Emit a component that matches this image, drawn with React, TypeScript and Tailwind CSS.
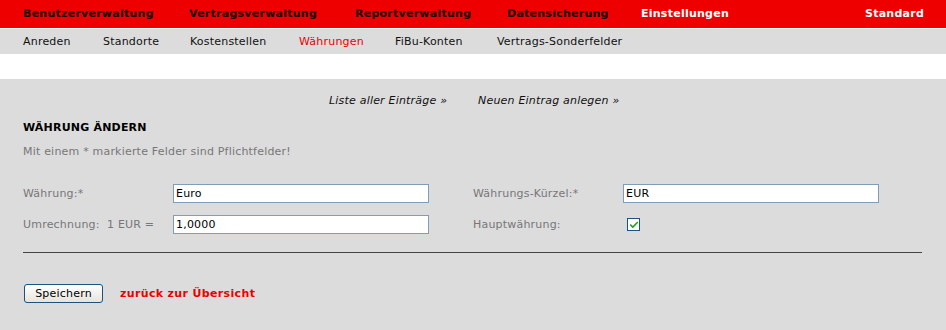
import { Check } from "lucide-react";

const mainMenu = [
  { label: "Benutzerverwaltung", w: "w-[166px]", active: false },
  { label: "Vertragsverwaltung", w: "w-[166px]", active: false },
  { label: "Reportverwaltung", w: "w-[152px]", active: false },
  { label: "Datensicherung", w: "w-[134px]", active: false },
  { label: "Einstellungen", w: "w-[150px]", active: true },
];

const subMenu = [
  { label: "Anreden", w: "w-[80px]", red: false },
  { label: "Standorte", w: "w-[87px]", red: false },
  { label: "Kostenstellen", w: "w-[109px]", red: false },
  { label: "Währungen", w: "w-[96px]", red: true },
  { label: "FiBu-Konten", w: "w-[102px]", red: false },
  { label: "Vertrags-Sonderfelder", w: "w-[160px]", red: false },
];

export default function App() {
  return (
    <div className="w-[946px] h-[330px] bg-white text-[11px] leading-[14px] tracking-[0.2px] font-['DejaVu_Sans',Verdana,sans-serif] overflow-hidden">

      {/* MAIN MENU */}
      <div className="h-[28px] bg-[#ee0000] flex items-center pl-[23px] pr-[22px] font-bold tracking-[0.25px]">
        {mainMenu.map((m) => (
          <div
            key={m.label}
            className={`${m.w} ${m.active ? "text-white" : "text-[#1a0000]"}`}
          >
            {m.label}
          </div>
        ))}
        <div className="ml-auto text-white">Standard</div>
      </div>

      {/* SUB MENU */}
      <div className="mt-px h-[25px] bg-[#dcdcdc] flex items-center pl-[23px]">
        {subMenu.map((s) => (
          <div
            key={s.label}
            className={`${s.w} ${s.red ? "text-[#ee0000]" : "text-[#111]"}`}
          >
            {s.label}
          </div>
        ))}
      </div>

      {/* CONTENT */}
      <div className="mt-[25px] h-[251px] bg-[#dcdcdc] px-[23px] pt-[15px]">

        <div className="flex h-[14px] pl-[306px] italic text-[#111]">
          <span className="w-[149px]">Liste aller Einträge »</span>
          <span>Neuen Eintrag anlegen »</span>
        </div>

        <h1 className="mt-[13px] h-[14px] font-bold text-black">WÄHRUNG ÄNDERN</h1>
        <p className="mt-[10px] h-[14px] text-[#777]">
          Mit einem * markierte Felder sind Pflichtfelder!
        </p>

        {/* FORM */}
        <div className="mt-[25px] flex flex-col gap-[12px] text-[#777]">
          <div className="flex items-center h-[19px]">
            <label className="w-[150px]">Währung:*</label>
            <input
              defaultValue="Euro"
              className="w-[256px] h-[19px] bg-white border border-[#7f9db9] px-[2px] text-black outline-none"
            />
            <label className="ml-[44px] w-[150px]">Währungs-Kürzel:*</label>
            <input
              defaultValue="EUR"
              className="w-[256px] h-[19px] bg-white border border-[#7f9db9] px-[2px] text-black outline-none"
            />
          </div>
          <div className="flex items-center h-[19px]">
            <label className="w-[150px] whitespace-pre">Umrechnung:  1 EUR =</label>
            <input
              defaultValue="1,0000"
              className="w-[256px] h-[19px] bg-white border border-[#7f9db9] px-[2px] text-black outline-none"
            />
            <label className="ml-[44px] w-[154px]">Hauptwährung:</label>
            <div className="w-[13px] h-[13px] bg-white border border-[#1c5180] flex items-center justify-center">
              <Check size={10} strokeWidth={4} className="text-[#21a121]" />
            </div>
          </div>
        </div>

        <div className="mt-[18px] w-[899px] h-px bg-[#444]" />

        {/* ACTIONS */}
        <div className="mt-[31px] flex items-center gap-[17px] pl-px">
          <button className="w-[79px] h-[19px] rounded-[3px] border border-[#1c5180] bg-gradient-to-b from-white to-[#e6e4dc] text-black text-[11px]">
            Speichern
          </button>
          <a className="font-bold text-[#ee0000] tracking-[0.35px]">zurück zur Übersicht</a>
        </div>

      </div>
    </div>
  );
}
